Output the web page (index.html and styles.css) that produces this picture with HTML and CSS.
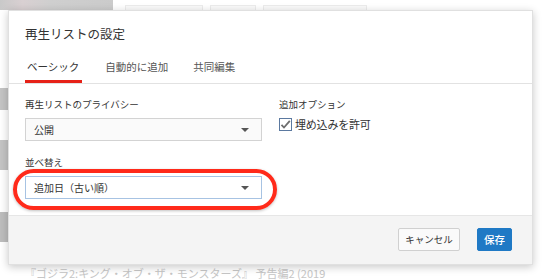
FILE: index.html
```html
<!DOCTYPE html>
<html lang="ja">
<head>
<meta charset="utf-8">
<link rel="stylesheet" href="styles.css">
</head>
<body>
<div class="page">
  <div class="top-band">
    <div class="thumb-top"></div>
    <div class="ghost-btn w1"></div>
    <div class="ghost-btn w2"></div>
    <div class="ghost-btn w3"></div>
  </div>
  <div class="side">
    <div class="side-thumb t1"></div>
    <div class="side-thumb t2"></div>
    <div class="side-thumb t3"></div>
  </div>
  <div class="bottom-text">『ゴジラ2:キング・オブ・ザ・モンスターズ』 予告編2 (2019</div>
</div>

<div class="dialog">
  <div class="dlg-head">
    <h1 class="title">再生リストの設定</h1>
    <div class="tabs">
      <div class="tab active">ベーシック</div>
      <div class="tab">自動的に追加</div>
      <div class="tab">共同編集</div>
    </div>
  </div>
  <div class="dlg-body">
    <div class="col-left">
      <div class="label">再生リストのプライバシー</div>
      <div class="select"><span>公開</span><span class="caret"></span></div>
      <div class="label sort-label">並べ替え</div>
      <div class="select-wrap">
        <div class="select focused"><span>追加日（古い順）</span><span class="caret"></span></div>
        <div class="ring"></div>
      </div>
    </div>
    <div class="col-right">
      <div class="label">追加オプション</div>
      <label class="check">
        <span class="box"><svg width="11" height="11" viewBox="0 0 11 11"><path d="M1.5 5.8 L4 8.5 L9.8 1.8" fill="none" stroke="#6d6d6d" stroke-width="1.8"/></svg></span>
        <span class="check-text">埋め込みを許可</span>
      </label>
    </div>
  </div>
  <div class="dlg-foot">
    <button class="btn cancel">キャンセル</button>
    <button class="btn save">保存</button>
  </div>
</div>
</body>
</html>
```

FILE: styles.css
```css
* { box-sizing: border-box; }
html, body { margin: 0; padding: 0; }
body {
  width: 543px;
  height: 280px;
  overflow: hidden;
  background: #fff;
  font-family: "Noto Sans CJK JP", "Noto Sans", "Liberation Sans", sans-serif;
  color: #333;
  position: relative;
}
.page { position: relative; width: 543px; height: 280px; }
.top-band { display: flex; align-items: flex-start; height: 10px; }
.thumb-top { width: 113px; height: 10px; background: linear-gradient(90deg, #c9c9c9, #d9d0d2 20%, #cfcfcf 45%, #cbcbcb); }
.ghost-btn { height: 6px; margin-top: 5px; border: 1px solid #ececec; border-bottom: none; background: #fafafa; }
.w1 { width: 78px; margin-left: 12px; }
.w2 { width: 46px; margin-left: 7px; }
.w3 { width: 104px; margin-left: 7px; }
.side { position: absolute; left: 0; top: 0; width: 8px; height: 280px; }
.side-thumb { position: absolute; left: 0; width: 8px; background: #c4c4c4; }
.t1 { top: 88px; height: 22px; }
.t2 { top: 140px; height: 30px; }
.t3 { top: 212px; height: 30px; background: #bdbdbd; }
.bottom-text {
  position: absolute;
  left: 25px;
  top: 267px;
  font-size: 11px;
  line-height: 13px;
  color: #c6c6c6;
  white-space: nowrap;
}

.dialog {
  position: absolute;
  left: 8px;
  top: 10px;
  width: 525px;
  height: 255px;
  background: #fff;
  border: 1px solid #e0e0e0;
  box-shadow: 0 2px 8px rgba(0,0,0,0.22);
  display: flex;
  flex-direction: column;
}
.dlg-head { padding: 0 16px; border-bottom: 1px solid #e2e2e2; }
.title {
  margin: 0;
  padding-top: 14px;
  font-size: 12.5px;
  font-weight: normal;
  line-height: 18px;
  color: #333;
}
.tabs { display: flex; gap: 21px; margin-top: 17px; }
.tab {
  font-size: 10.5px;
  line-height: 14px;
  color: #555;
  padding: 0 2px 6px;
  border-bottom: 3px solid transparent;
}
.tab.active { color: #333; border-bottom-color: #e62117; padding-right: 3px; }

.dlg-body { flex: 1; display: flex; padding: 14px 16px 0; }
.col-left { width: 237px; }
.col-right { margin-left: 17px; }
.label { font-size: 9.5px; line-height: 13px; color: #333; }
.select {
  margin-top: 7px;
  height: 23px;
  border: 1px solid #d3d3d3;
  background: #fafafa;
  display: flex;
  align-items: center;
  justify-content: space-between;
  padding: 0 10px 0 8px;
  font-size: 10px;
  color: #333;
}
.caret {
  width: 0; height: 0;
  border-left: 4px solid transparent;
  border-right: 4px solid transparent;
  border-top: 4px solid #555;
  margin-right: 2px;
}
.sort-label { margin-top: 15px; }
.select-wrap { position: relative; }
.select.focused { border-color: #a7c3e3; background: #fff; }
.ring {
  position: absolute;
  left: -12px;
  right: -15px;
  top: -7px;
  bottom: -11px;
  border: 4px solid #ff2a1a;
  border-radius: 21px;
  box-shadow: 0 1px 3px rgba(0,0,0,0.25);
  pointer-events: none;
}
.check { display: flex; align-items: center; margin-top: 5px; gap: 3px; }
.box {
  width: 13px; height: 13px;
  border: 1px solid #5b79a0;
  background: #fff;
  display: flex;
  align-items: center;
  justify-content: center;
}
.check-text { font-size: 11px; color: #333; letter-spacing: -0.2px; }

.dlg-foot {
  height: 49px;
  background: #f4f4f4;
  border-top: 1px solid #e6e6e6;
  display: flex;
  justify-content: flex-end;
  align-items: center;
  gap: 17px;
  padding: 0 20px 2px 0;
}
.btn {
  height: 23px;
  font-family: inherit;
  font-size: 9.5px;
  border-radius: 2px;
  padding: 0;
  cursor: pointer;
}
.cancel { width: 62px; border: 1px solid #d0d0d0; background: #fafafa; color: #333; }
.save { width: 35px; border: 1px solid #1f79c5; background: #1f79c5; color: #fff; font-size: 10.5px; font-weight: 500; }
```
